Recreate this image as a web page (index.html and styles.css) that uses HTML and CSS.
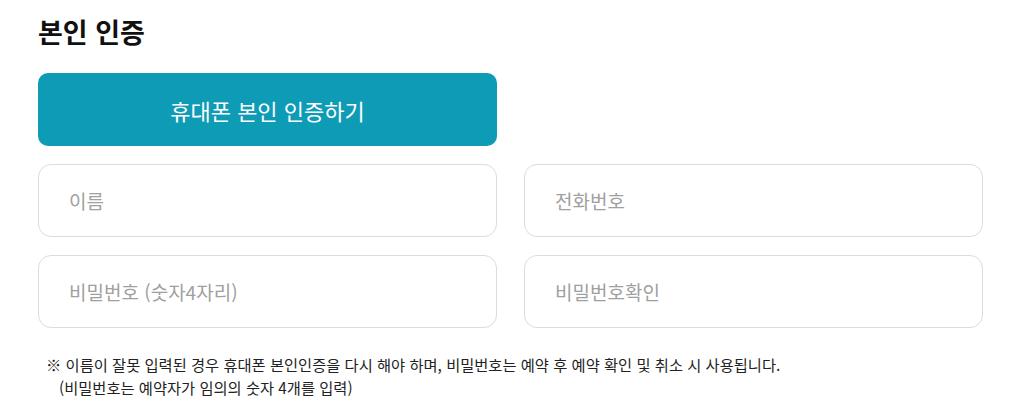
FILE: index.html
```html
<!DOCTYPE html>
<html lang="ko">
<head>
<meta charset="utf-8">
<link rel="stylesheet" href="styles.css">
</head>
<body>
<div class="wrap">
  <h2 class="title">본인 인증</h2>
  <div class="grid">
    <button class="btn">휴대폰 본인 인증하기</button>
    <div></div>
    <input class="field" placeholder="이름">
    <input class="field" placeholder="전화번호">
    <input class="field" placeholder="비밀번호 (숫자4자리)">
    <input class="field" placeholder="비밀번호확인">
  </div>
  <p class="note">※ 이름이 잘못 입력된 경우 휴대폰 본인인증을 다시 해야 하며, 비밀번호는 예약 후 예약 확인 및 취소 시 사용됩니다.<span class="sub">(비밀번호는 예약자가 임의의 숫자 4개를 입력)</span></p>
</div>
</body>
</html>
```
FILE: styles.css
```css
html, body { margin: 0; padding: 0; background: #fff; }
body { font-family: "Noto Sans CJK KR", "Noto Sans", sans-serif; color: #111; }
.wrap { padding: 14px 40px 0 38px; width: 945px; }
.title { margin: 0 0 23px; font-size: 27px; font-weight: 700; line-height: 36px; color: #111; }
.grid { display: grid; grid-template-columns: 459px 459px; column-gap: 27px; row-gap: 18px; }
.btn { height: 73px; border: none; border-radius: 10px; background: #0e9bb5; color: #fff; font-family: inherit; font-size: 22px; font-weight: 400; padding: 0; cursor: pointer; }
.field { height: 73px; box-sizing: border-box; border: 1px solid #dcdcdc; border-radius: 13px; padding: 0 30px; font-family: inherit; font-size: 19px; color: #333; outline: none; }
.field::placeholder { color: #a0a0a0; }
.note { margin: 25px 0 0; padding-left: 8px; font-size: 15.3px; line-height: 23px; color: #222; }
.sub { display: block; padding-left: 13px; }
```
